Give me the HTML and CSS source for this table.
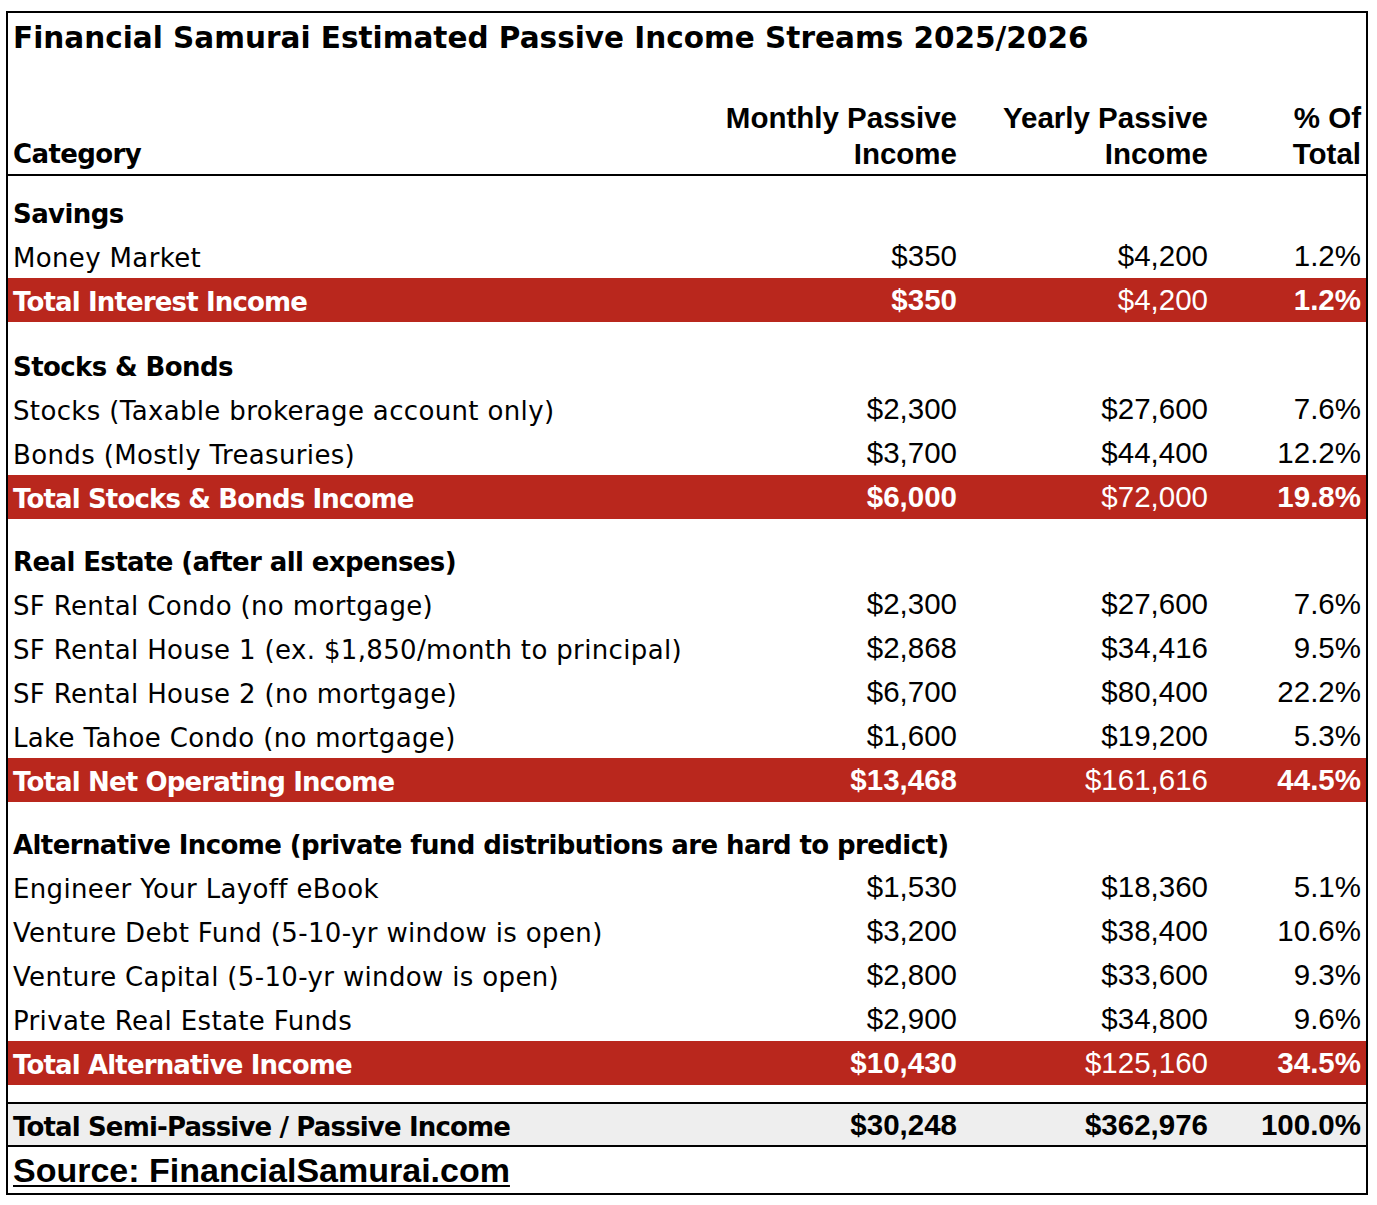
FILE: index.html
```html
<!DOCTYPE html>
<html lang="en">
<head>
<meta charset="utf-8">
<title>Financial Samurai Estimated Passive Income Streams 2025/2026</title>
<link rel="stylesheet" href="styles.css">
</head>
<body>
<div class="sheet">
  <div class="title">Financial Samurai Estimated Passive Income Streams 2025/2026</div>

  <div class="row head">
    <div class="label heading">Category</div>
    <div class="num bold">Monthly Passive<br>Income</div>
    <div class="num bold">Yearly Passive<br>Income</div>
    <div class="num bold">% Of<br>Total</div>
  </div>

  <div class="blank blank-14"></div>

  <div class="row"><div class="label heading">Savings</div></div>
  <div class="row"><div class="label">Money Market</div><div class="num">$350</div><div class="num">$4,200</div><div class="num">1.2%</div></div>
  <div class="row total"><div class="label strong">Total Interest Income</div><div class="num bold">$350</div><div class="num">$4,200</div><div class="num bold">1.2%</div></div>

  <div class="blank blank-21"></div>

  <div class="row"><div class="label heading">Stocks &amp; Bonds</div></div>
  <div class="row"><div class="label">Stocks (Taxable brokerage account only)</div><div class="num">$2,300</div><div class="num">$27,600</div><div class="num">7.6%</div></div>
  <div class="row"><div class="label">Bonds (Mostly Treasuries)</div><div class="num">$3,700</div><div class="num">$44,400</div><div class="num">12.2%</div></div>
  <div class="row total"><div class="label strong">Total Stocks &amp; Bonds Income</div><div class="num bold">$6,000</div><div class="num">$72,000</div><div class="num bold">19.8%</div></div>

  <div class="blank blank-19"></div>

  <div class="row"><div class="label heading">Real Estate (after all expenses)</div></div>
  <div class="row"><div class="label">SF Rental Condo (no mortgage)</div><div class="num">$2,300</div><div class="num">$27,600</div><div class="num">7.6%</div></div>
  <div class="row"><div class="label">SF Rental House 1 (ex. $1,850/month to principal)</div><div class="num">$2,868</div><div class="num">$34,416</div><div class="num">9.5%</div></div>
  <div class="row"><div class="label">SF Rental House 2 (no mortgage)</div><div class="num">$6,700</div><div class="num">$80,400</div><div class="num">22.2%</div></div>
  <div class="row"><div class="label">Lake Tahoe Condo (no mortgage)</div><div class="num">$1,600</div><div class="num">$19,200</div><div class="num">5.3%</div></div>
  <div class="row total"><div class="label strong">Total Net Operating Income</div><div class="num bold">$13,468</div><div class="num">$161,616</div><div class="num bold">44.5%</div></div>

  <div class="blank blank-19"></div>

  <div class="row"><div class="label heading">Alternative Income (private fund distributions are hard to predict)</div></div>
  <div class="row"><div class="label">Engineer Your Layoff eBook</div><div class="num">$1,530</div><div class="num">$18,360</div><div class="num">5.1%</div></div>
  <div class="row"><div class="label">Venture Debt Fund (5-10-yr window is open)</div><div class="num">$3,200</div><div class="num">$38,400</div><div class="num">10.6%</div></div>
  <div class="row"><div class="label">Venture Capital (5-10-yr window is open)</div><div class="num">$2,800</div><div class="num">$33,600</div><div class="num">9.3%</div></div>
  <div class="row"><div class="label">Private Real Estate Funds</div><div class="num">$2,900</div><div class="num">$34,800</div><div class="num">9.6%</div></div>
  <div class="row total"><div class="label strong">Total Alternative Income</div><div class="num bold">$10,430</div><div class="num">$125,160</div><div class="num bold">34.5%</div></div>

  <div class="blank blank-17"></div>

  <div class="row grand"><div class="label strong">Total Semi-Passive / Passive Income</div><div class="num bold">$30,248</div><div class="num bold">$362,976</div><div class="num bold">100.0%</div></div>

  <div class="source">Source: FinancialSamurai.com</div>
</div>
</body>
</html>
```

FILE: styles.css
```css
* {
  box-sizing: content-box;
}

body {
  margin: 0;
  background: #ffffff;
}

.sheet {
  margin: 11px 0 0 6px;
  width: 1358px;
  border: 2px solid #000000;
  font-family: "DejaVu Sans", Verdana, sans-serif;
  font-size: 26px;
  color: #000000;
}

.title {
  height: 51px;
  line-height: 51px;
  padding-left: 5px;
  font-size: 29.5px;
  font-weight: bold;
  letter-spacing: 0;
  white-space: nowrap;
}

.row {
  display: grid;
  grid-template-columns: 704px 250px 251px 153px;
  height: 44px;
  align-items: center;
}

.row > div {
  padding: 0 5px;
  white-space: nowrap;
}

.label {
  font-family: "DejaVu Sans", Verdana, sans-serif;
  font-size: 26px;
  letter-spacing: 0.35px;
}

.row > .label {
  padding-top: 4px;
}

.heading {
  font-weight: bold;
  letter-spacing: -0.6px;
}

.strong {
  font-weight: bold;
  letter-spacing: -0.85px;
}

.num {
  text-align: right;
  font-family: "Liberation Sans", Arial, sans-serif;
  font-size: 29.5px;
}

.bold {
  font-weight: bold;
}

.head {
  height: 108px;
  padding-bottom: 2px;
  align-items: end;
  border-bottom: 2px solid #000000;
}

.head > div {
  line-height: 36px;
}

.head > .label {
  padding-top: 0;
}

.blank-14 { height: 14px; }
.blank-17 { height: 17px; }
.blank-19 { height: 19px; }
.blank-21 { height: 21px; }

.total {
  background: #b9271d;
  color: #ffffff;
}

.grand {
  height: 41px;
  background: #eeeeee;
  border-top: 2px solid #000000;
  border-bottom: 2px solid #000000;
}

.source {
  height: 46px;
  line-height: 46px;
  padding-left: 5px;
  font-family: "Liberation Sans", Arial, sans-serif;
  font-size: 34px;
  font-weight: bold;
  text-decoration: underline;
  text-decoration-thickness: 2px;
  text-underline-offset: 3px;
}
```
